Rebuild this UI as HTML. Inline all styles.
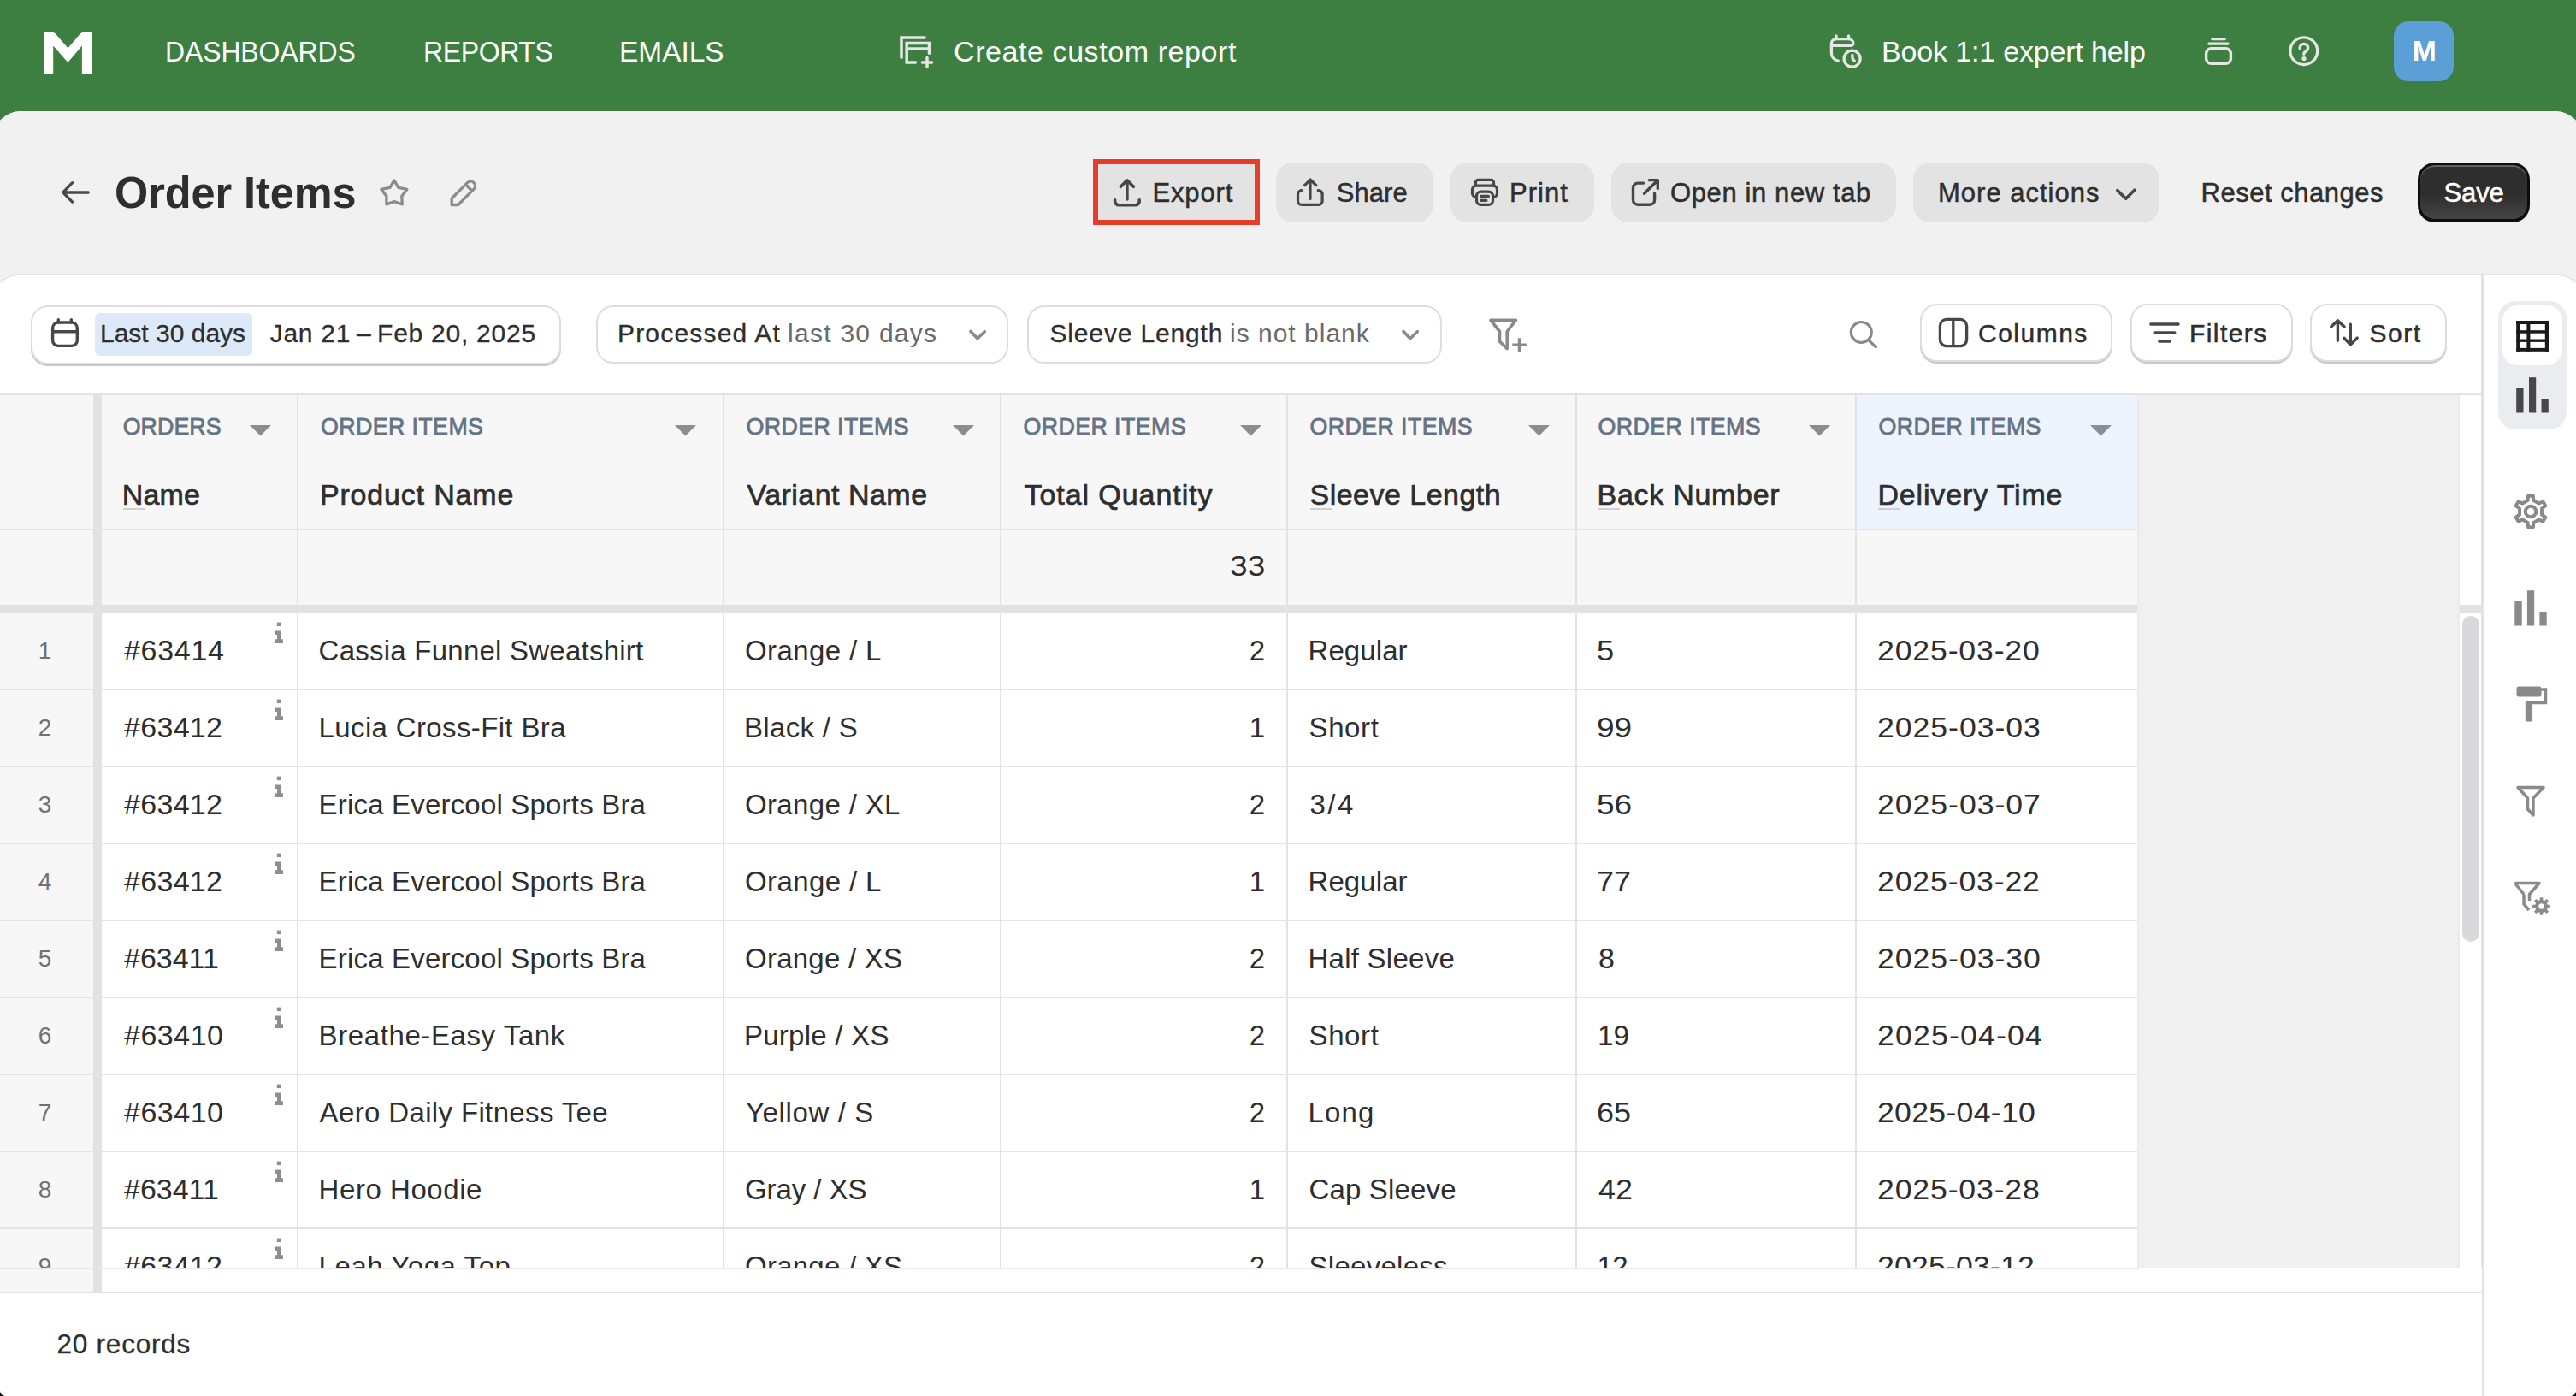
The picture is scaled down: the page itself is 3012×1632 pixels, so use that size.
<!DOCTYPE html>
<html><head><meta charset="utf-8"><style>
html,body{margin:0;padding:0;}
body{width:3012px;height:1632px;overflow:hidden;position:relative;background:#3d7f41;font-family:"Liberation Sans", sans-serif;}
div{box-sizing:border-box;}
</style></head><body>
<div style="position:absolute;left:0px;top:0px;width:3012px;height:135px;background:#3d7f41"></div><svg style="position:absolute;left:0px;top:0px;overflow:visible" width="120" height="100" viewBox="0 0 120 100"><polygon fill="#fff" points="51.8,37 62.8,37 79.4,56.3 95.9,37 107,37 107,85.9 95.9,85.9 95.9,53.6 79.4,72.9 62.2,53.6 62.2,85.9 51.8,85.9"/></svg><div style="position:absolute;left:193.18px;top:42.52px;font-size:34px;line-height:34px;color:#fff;font-weight:400;letter-spacing:-0.113px;white-space:pre;transform:scaleX(0.9400);transform-origin:0 0;">DASHBOARDS</div><div style="position:absolute;left:494.78px;top:42.52px;font-size:34px;line-height:34px;color:#fff;font-weight:400;letter-spacing:-0.365px;white-space:pre;transform:scaleX(0.9400);transform-origin:0 0;">REPORTS</div><div style="position:absolute;left:724.05px;top:42.52px;font-size:34px;line-height:34px;color:#fff;font-weight:400;letter-spacing:0.000px;white-space:pre;transform:scaleX(0.9833);transform-origin:0 0;">EMAILS</div><div style="position:absolute;left:1115.00px;top:42.52px;font-size:34px;line-height:34px;color:#fff;font-weight:400;letter-spacing:0.579px;white-space:pre;">Create custom report</div><div style="position:absolute;left:2200.00px;top:42.72px;font-size:34px;line-height:34px;color:#fff;font-weight:400;letter-spacing:-0.158px;white-space:pre;">Book 1:1 expert help</div><svg style="position:absolute;left:1045px;top:35px;overflow:visible" width="50" height="50" viewBox="0 0 50 50"><g fill="none" stroke="#e6e6e6" stroke-width="3.5" stroke-linecap="round" stroke-linejoin="miter"><path d="M9 32.2 V9.1 H36.2"/><path d="M25.4 38.1 H15.2 V15.4 H41.5 V27.2 M15.2 22 H41.5"/><path d="M39 32.4 V43.6 M33.4 38.1 H44.6"/></g></svg><svg style="position:absolute;left:2135px;top:35px;overflow:visible" width="50" height="50" viewBox="0 0 50 50"><g fill="none" stroke="#e6e6e6" stroke-width="3.3" stroke-linecap="round" stroke-linejoin="round"><path d="M14.3 36.2 C9.5 35.2 6.4 31.5 6.4 27 V16 C6.4 13 8.8 10.7 11.8 10.7 H26.8 C29.6 10.7 31.9 13 31.9 15.5 C31.9 17.5 30.5 18.3 28.5 18.3 H6.4"/><path d="M12 6.8 V10.7 M26.5 6.8 V10.7"/><circle cx="30.6" cy="33.7" r="9.5"/><path d="M30.8 29.4 V31.5 C30.8 33.5 31.8 35 33.3 36.2"/></g></svg><svg style="position:absolute;left:2570px;top:35px;overflow:visible" width="50" height="50" viewBox="0 0 50 50"><g fill="none" stroke="#e6e6e6" stroke-width="3.4" stroke-linecap="round" stroke-linejoin="round"><path d="M16.8 10.6 H31.2 M12.9 16.1 H35.1"/><rect x="9.6" y="21.8" width="28.8" height="17.6" rx="6"/></g></svg><svg style="position:absolute;left:2668px;top:35px;overflow:visible" width="50" height="50" viewBox="0 0 50 50"><g fill="none" stroke="#e6e6e6" stroke-width="3.3" stroke-linecap="round" stroke-linejoin="round"><circle cx="25.8" cy="24.7" r="15.9"/><path d="M21 21.5 C21 18.5 23 16.3 25.8 16.3 C28.6 16.3 30.6 18.3 30.6 21 C30.6 23.5 29 24.6 27.5 25.5 C26.4 26.2 25.8 27 25.8 28.3"/></g></svg><svg style="position:absolute;left:2668px;top:35px;overflow:visible" width="50" height="50" viewBox="0 0 50 50"><circle cx="26" cy="33.6" r="2.6" fill="#e6e6e6"/></svg><div style="position:absolute;left:2799px;top:25px;width:70px;height:70px;background:#5a9fd6;border-radius:17px"></div><div style="position:absolute;left:2820.50px;top:42.22px;font-size:34px;line-height:34px;color:#fff;font-weight:700;letter-spacing:0.000px;white-space:pre;">M</div><div style="position:absolute;left:-8px;top:130px;width:3028px;height:1520px;background:#f1f1f1;border-radius:32px 32px 0 0;border-top:1px solid #fbfbfb"></div><div style="position:absolute;left:133.66px;top:198.98px;font-size:52px;line-height:52px;color:#2e2e2e;font-weight:700;letter-spacing:-0.068px;white-space:pre;transform:scaleX(0.9700);transform-origin:0 0;">Order Items</div><svg style="position:absolute;left:0px;top:180px;overflow:visible" width="120" height="70" viewBox="0 0 120 70"><g fill="none" stroke="#4a4a4a" stroke-width="3.3" stroke-linecap="round" stroke-linejoin="round"><path d="M74 45 H103.2 M84.6 33.7 L73.7 45 L84.6 56.1"/></g></svg><svg style="position:absolute;left:430px;top:200px;overflow:visible" width="140" height="50" viewBox="0 0 140 50"><g fill="none" stroke="#8c8c8c" stroke-width="3.3" stroke-linecap="round" stroke-linejoin="round" transform="translate(-430,-200)"><path d="M461 210.9 L465.8 219.4 L475.9 221.4 L469.8 229.3 L470.3 238.9 L461 235.6 L451.9 238.9 L451.9 229.3 L445.9 221.4 L455.9 219.4 Z"/><path d="M528.2 239.5 L528.2 232 L546.5 213.7 A5.3 5.3 0 0 1 554 221.2 L535.7 239.5 Z M544.45 215.75 L551.95 223.25"/></g></svg><div style="position:absolute;left:1277.5px;top:185.5px;width:195px;height:77px;border:6px solid #e63c2a;background:#e3e3e3"></div><div style="position:absolute;left:1347.40px;top:209.76px;font-size:31px;line-height:31px;color:#2e2e2e;font-weight:400;letter-spacing:0.860px;white-space:pre;-webkit-text-stroke:0.5px #2e2e2e;">Export</div><svg style="position:absolute;left:1295px;top:200px;overflow:visible" width="50" height="50" viewBox="0 0 50 50"><g fill="none" stroke="#474747" stroke-width="3.6" stroke-linecap="round" stroke-linejoin="round"><path d="M22.9 33 V11 M15.4 18.3 L22.9 10.8 L30.4 18.3"/><path d="M8.6 33.7 V35.2 A4.5 4.5 0 0 0 13.1 39.7 H32.7 A4.5 4.5 0 0 0 37.2 35.2 V33.7"/></g></svg><div style="position:absolute;left:1492px;top:190px;width:184px;height:70px;background:#e3e3e3;border-radius:20px"></div><div style="position:absolute;left:1562.70px;top:209.76px;font-size:31px;line-height:31px;color:#2e2e2e;font-weight:400;letter-spacing:0.075px;white-space:pre;-webkit-text-stroke:0.5px #2e2e2e;">Share</div><svg style="position:absolute;left:1500px;top:195px;overflow:visible" width="60" height="60" viewBox="0 0 60 60"><g fill="none" stroke="#474747" stroke-width="3.2" stroke-linecap="round" stroke-linejoin="round"><path d="M32 37.4 V15.2 M25.5 21.7 L32 15 L38.8 21.7"/><path d="M21.7 27.6 A4.5 4.5 0 0 0 17.5 32 V39.9 A4.5 4.5 0 0 0 22 44.4 H41.6 A4.5 4.5 0 0 0 46.1 39.9 V32 A4.5 4.5 0 0 0 41.2 27.6"/></g></svg><div style="position:absolute;left:1696px;top:190px;width:168px;height:70px;background:#e3e3e3;border-radius:20px"></div><div style="position:absolute;left:1765.00px;top:209.76px;font-size:31px;line-height:31px;color:#2e2e2e;font-weight:400;letter-spacing:1.000px;white-space:pre;-webkit-text-stroke:0.5px #2e2e2e;">Print</div><svg style="position:absolute;left:1710px;top:200px;overflow:visible" width="50" height="50" viewBox="0 0 50 50"><g fill="none" stroke="#474747" stroke-width="3.2" stroke-linecap="round" stroke-linejoin="round"><path d="M15.4 17.2 V13.4 A3 3 0 0 1 18.4 10.4 H33.5 A3 3 0 0 1 36.5 13.4 V17.2"/><path d="M15.4 30.4 H16 A4.5 4.5 0 0 1 11.5 25.9 V21.7 A4.5 4.5 0 0 1 16 17.2 H36 A4.5 4.5 0 0 1 40.5 21.7 V25.9 A4.5 4.5 0 0 1 36 30.4 H35.5"/><rect x="16.5" y="24.2" width="19" height="15.2" rx="5"/><path d="M21.5 29.4 H30.4 M21.5 34.4 H27.9"/></g></svg><div style="position:absolute;left:1884px;top:190px;width:333px;height:70px;background:#e3e3e3;border-radius:20px"></div><div style="position:absolute;left:1953.00px;top:209.76px;font-size:31px;line-height:31px;color:#2e2e2e;font-weight:400;letter-spacing:0.607px;white-space:pre;-webkit-text-stroke:0.5px #2e2e2e;">Open in new tab</div><svg style="position:absolute;left:1900px;top:200px;overflow:visible" width="50" height="50" viewBox="0 0 50 50"><g fill="none" stroke="#474747" stroke-width="3.4" stroke-linecap="round" stroke-linejoin="round"><path d="M21.5 14.1 H15 A5.5 5.5 0 0 0 9.5 19.6 V33.7 A5.5 5.5 0 0 0 15 39.2 H29.1 A5.5 5.5 0 0 0 34.6 33.7 V26.3"/><path d="M22.6 26.3 L38.3 10.7 M28.3 10.6 H38.3 V20.4"/></g></svg><div style="position:absolute;left:2237px;top:190px;width:288px;height:70px;background:#e3e3e3;border-radius:20px"></div><div style="position:absolute;left:2266.00px;top:209.76px;font-size:31px;line-height:31px;color:#2e2e2e;font-weight:400;letter-spacing:1.000px;white-space:pre;-webkit-text-stroke:0.5px #2e2e2e;">More actions</div><svg style="position:absolute;left:2460px;top:200px;overflow:visible" width="50" height="50" viewBox="0 0 50 50"><g fill="none" stroke="#474747" stroke-width="3.6" stroke-linecap="round" stroke-linejoin="round"><path d="M15.8 22.6 L25.7 32.3 L35.8 22.2"/></g></svg><div style="position:absolute;left:2573.60px;top:209.76px;font-size:31px;line-height:31px;color:#2e2e2e;font-weight:400;letter-spacing:0.508px;white-space:pre;-webkit-text-stroke:0.5px #2e2e2e;">Reset changes</div><div style="position:absolute;left:2827px;top:190px;width:131px;height:70px;background:linear-gradient(#2e2e2e 55%,#454545);border:3px solid #0d0d0d;border-bottom-width:4px;border-radius:20px;box-shadow:inset 0 2px 0 #626262"></div><div style="position:absolute;left:2857.50px;top:209.76px;font-size:31px;line-height:31px;color:#fff;font-weight:400;letter-spacing:-0.100px;white-space:pre;-webkit-text-stroke:0.5px #fff;">Save</div><div style="position:absolute;left:-6px;top:320px;width:3024px;height:1400px;background:#fff;border-top:2px solid #e2e2e2;border-radius:28px 28px 0 0"></div><div style="position:absolute;left:36px;top:356.5px;width:620px;height:69px;background:#fff;border:2px solid #dedede;border-radius:20px;box-shadow:0 2px 0 #c8c8c8"></div><svg style="position:absolute;left:50px;top:365px;overflow:visible" width="50" height="50" viewBox="0 0 50 50"><g fill="none" stroke="#474747" stroke-width="3.4" stroke-linecap="round" stroke-linejoin="round"><rect x="11.6" y="12" width="28.7" height="27.4" rx="6.5"/><path d="M11.6 22.7 H40.3 M18.3 8.6 V12 M33.3 8.6 V12"/></g></svg><div style="position:absolute;left:111px;top:366px;width:184px;height:50px;background:#dbe9f9;border-radius:6px"></div><div style="position:absolute;left:117.00px;top:374.91px;font-size:30px;line-height:30px;color:#2e2e2e;font-weight:400;letter-spacing:0.000px;white-space:pre;-webkit-text-stroke:0.3px #2e2e2e;">Last 30 days</div><div style="position:absolute;left:315.70px;top:374.91px;font-size:30px;line-height:30px;color:#2e2e2e;font-weight:400;letter-spacing:0.740px;white-space:pre;-webkit-text-stroke:0.3px #2e2e2e;">Jan 21 – Feb 20, 2025</div><div style="position:absolute;left:697px;top:357px;width:482px;height:68px;background:#fff;border:2px solid #dedede;border-radius:20px"></div><div style="position:absolute;left:722.00px;top:374.91px;font-size:30px;line-height:30px;color:#2e2e2e;font-weight:400;letter-spacing:1.182px;white-space:pre;-webkit-text-stroke:0.3px #2e2e2e;">Processed At</div><div style="position:absolute;left:921.00px;top:374.91px;font-size:30px;line-height:30px;color:#6a6a6a;font-weight:400;letter-spacing:1.273px;white-space:pre;">last 30 days</div><svg style="position:absolute;left:1125px;top:375px;overflow:visible" width="40" height="35" viewBox="0 0 40 35"><g fill="none" stroke="#8a8a8a" stroke-width="3.6" stroke-linecap="round" stroke-linejoin="round"><path d="M9.9 12.5 L17.9 20.8 L26.3 12.7"/></g></svg><div style="position:absolute;left:1201px;top:357px;width:485px;height:68px;background:#fff;border:2px solid #dedede;border-radius:20px"></div><div style="position:absolute;left:1227.50px;top:374.91px;font-size:30px;line-height:30px;color:#2e2e2e;font-weight:400;letter-spacing:0.833px;white-space:pre;-webkit-text-stroke:0.3px #2e2e2e;">Sleeve Length</div><div style="position:absolute;left:1438.00px;top:374.91px;font-size:30px;line-height:30px;color:#6a6a6a;font-weight:400;letter-spacing:1.000px;white-space:pre;">is not blank</div><svg style="position:absolute;left:1631px;top:375px;overflow:visible" width="40" height="35" viewBox="0 0 40 35"><g fill="none" stroke="#8a8a8a" stroke-width="3.6" stroke-linecap="round" stroke-linejoin="round"><path d="M9.9 12.5 L17.9 20.8 L26.3 12.7"/></g></svg><svg style="position:absolute;left:1735px;top:365px;overflow:visible" width="55" height="55" viewBox="0 0 55 55"><g fill="none" stroke="#8a8a8a" stroke-width="3.6" stroke-linecap="round" stroke-linejoin="round"><path d="M7.9 9.3 H37.4 L27.2 22.5 V42.6 L18.5 34.3 V22.5 Z"/></g></svg><svg style="position:absolute;left:1735px;top:365px;overflow:visible" width="55" height="55" viewBox="0 0 55 55"><g fill="none" stroke="#8a8a8a" stroke-width="3.6" stroke-linecap="butt" stroke-linejoin="round"><path d="M41.6 30.3 V46.5 M33.3 38.2 H49.8"/></g></svg><svg style="position:absolute;left:2155px;top:365px;overflow:visible" width="50" height="50" viewBox="0 0 50 50"><g fill="none" stroke="#8a8a8a" stroke-width="3.2" stroke-linecap="round" stroke-linejoin="round"><circle cx="21.3" cy="23.5" r="12"/><path d="M30.4 33.3 L38.5 40.7"/></g></svg><div style="position:absolute;left:2244.5px;top:355px;width:225.5px;height:68px;background:#fff;border:2px solid #dedede;border-radius:20px;box-shadow:0 2px 0 #c8c8c8"></div><div style="position:absolute;left:2313.00px;top:374.91px;font-size:30px;line-height:30px;color:#2e2e2e;font-weight:400;letter-spacing:1.500px;white-space:pre;-webkit-text-stroke:0.5px #2e2e2e;">Columns</div><svg style="position:absolute;left:2260px;top:365px;overflow:visible" width="50" height="50" viewBox="0 0 50 50"><g fill="none" stroke="#474747" stroke-width="3.3" stroke-linecap="round" stroke-linejoin="round"><rect x="8.4" y="8.4" width="31.2" height="31.2" rx="7.5"/><path d="M23.8 8.4 V39.6"/></g></svg><div style="position:absolute;left:2491px;top:355px;width:189.5px;height:68px;background:#fff;border:2px solid #dedede;border-radius:20px;box-shadow:0 2px 0 #c8c8c8"></div><div style="position:absolute;left:2560.00px;top:374.91px;font-size:30px;line-height:30px;color:#2e2e2e;font-weight:400;letter-spacing:1.417px;white-space:pre;-webkit-text-stroke:0.5px #2e2e2e;">Filters</div><svg style="position:absolute;left:2505px;top:365px;overflow:visible" width="50" height="50" viewBox="0 0 50 50"><g fill="none" stroke="#474747" stroke-width="3.7" stroke-linecap="round" stroke-linejoin="round"><path d="M10 14 H41.9 M14.3 24 H37.6 M20 33.8 H31.9"/></g></svg><div style="position:absolute;left:2701px;top:355px;width:159.5px;height:68px;background:#fff;border:2px solid #dedede;border-radius:20px;box-shadow:0 2px 0 #c8c8c8"></div><div style="position:absolute;left:2770.60px;top:374.91px;font-size:30px;line-height:30px;color:#2e2e2e;font-weight:400;letter-spacing:1.467px;white-space:pre;-webkit-text-stroke:0.5px #2e2e2e;">Sort</div><svg style="position:absolute;left:2715px;top:365px;overflow:visible" width="50" height="50" viewBox="0 0 50 50"><g fill="none" stroke="#474747" stroke-width="3.4" stroke-linecap="round" stroke-linejoin="round"><path d="M18.4 33.3 V10.4 M10.7 17 L18.4 9.7 L26.1 17 M33.3 14.1 V38 M26 30.4 L33.3 38 L41.2 30.1"/></g></svg><div style="position:absolute;left:2901px;top:322px;width:3px;height:1320px;background:#e2e2e2"></div><div style="position:absolute;left:2921px;top:352px;width:80px;height:150px;background:#ebecf0;border-radius:20px"></div><div style="position:absolute;left:2926px;top:357px;width:70px;height:70px;background:#fff;border-radius:18px"></div><svg style="position:absolute;left:2930px;top:365px;overflow:visible" width="60" height="60" viewBox="0 0 60 60"><g fill="#1a1a1a" transform="translate(-2930,-365)"><rect x="2942.2" y="375" width="4.4" height="35.8"/><rect x="2975.8" y="375" width="4.2" height="35.8"/><rect x="2954.4" y="375" width="4" height="35.8"/><rect x="2942.2" y="375" width="37.8" height="4"/><rect x="2942.2" y="386.2" width="37.8" height="3.5"/><rect x="2942.2" y="396.5" width="37.8" height="3.4"/><rect x="2942.2" y="406.9" width="37.8" height="3.9"/></g></svg><svg style="position:absolute;left:2930px;top:430px;overflow:visible" width="60" height="60" viewBox="0 0 60 60"><g fill="#484848" transform="translate(-2930,-430)"><rect x="2942.2" y="454" width="8.3" height="28.5"/><rect x="2957" y="441.2" width="8.2" height="41.3"/><rect x="2971.5" y="466" width="8.3" height="16.5"/></g></svg><svg style="position:absolute;left:2930px;top:565px;overflow:visible" width="60" height="60" viewBox="0 0 60 60"><g fill="none" stroke="#8a8a8a" stroke-width="4" stroke-linejoin="round" transform="translate(-2930,-565)"><path d="M2955.64,584.92 L2956.11,579.73 L2961.89,579.73 L2962.36,584.92 L2968.65,588.55 L2973.38,586.36 L2976.27,591.37 L2972.00,594.37 L2972.00,601.63 L2976.27,604.63 L2973.38,609.64 L2968.65,607.45 L2962.36,611.08 L2961.89,616.27 L2956.11,616.27 L2955.64,611.08 L2949.35,607.45 L2944.62,609.64 L2941.73,604.63 L2946.00,601.63 L2946.00,594.37 L2941.73,591.37 L2944.62,586.36 L2949.35,588.55 Z"/><circle cx="2959" cy="598" r="6.3"/></g></svg><svg style="position:absolute;left:2930px;top:680px;overflow:visible" width="60" height="60" viewBox="0 0 60 60"><g fill="#8a8a8a" transform="translate(-2930,-680)"><rect x="2940.3" y="703" width="8.4" height="28.5"/><rect x="2954.9" y="690.2" width="8.3" height="41.3"/><rect x="2969.4" y="715.3" width="8.3" height="16.2"/></g></svg><svg style="position:absolute;left:2930px;top:790px;overflow:visible" width="60" height="60" viewBox="0 0 60 60"><g transform="translate(-2930,-790)"><rect x="2942.5" y="802.5" width="29" height="12" rx="2.5" fill="#8a8a8a"/><path d="M2971 806 H2976.5 V821.5 H2957" fill="none" stroke="#8a8a8a" stroke-width="3.5"/><rect x="2952.8" y="819" width="8.3" height="24.6" rx="1.5" fill="#8a8a8a"/></g></svg><svg style="position:absolute;left:2930px;top:905px;overflow:visible" width="60" height="60" viewBox="0 0 60 60"><g fill="none" stroke="#8a8a8a" stroke-width="3.5" stroke-linejoin="round" transform="translate(-2930,-905)"><path d="M2944 920.5 H2974 L2962 933 V953 L2955.5 946 V933 Z"/></g></svg><svg style="position:absolute;left:2930px;top:1020px;overflow:visible" width="60" height="60" viewBox="0 0 60 60"><g transform="translate(-2930,-1020)"><path d="M2940.5 1032.5 H2969 L2957.5 1045.5 V1053 M2951 1045.5 L2940.5 1032.5 M2951 1045.5 V1057 L2957 1064" fill="none" stroke="#8a8a8a" stroke-width="3.5" stroke-linejoin="round"/><path d="M2969.63,1052.24 L2969.86,1049.13 L2973.14,1049.13 L2973.37,1052.24 L2975.32,1053.04 L2977.67,1051.01 L2979.99,1053.33 L2977.96,1055.68 L2978.76,1057.63 L2981.87,1057.86 L2981.87,1061.14 L2978.76,1061.37 L2977.96,1063.32 L2979.99,1065.67 L2977.67,1067.99 L2975.32,1065.96 L2973.37,1066.76 L2973.14,1069.87 L2969.86,1069.87 L2969.63,1066.76 L2967.68,1065.96 L2965.33,1067.99 L2963.01,1065.67 L2965.04,1063.32 L2964.24,1061.37 L2961.13,1061.14 L2961.13,1057.86 L2964.24,1057.63 L2965.04,1055.68 L2963.01,1053.33 L2965.33,1051.01 L2967.68,1053.04 Z" fill="#8a8a8a"/><circle cx="2971.5" cy="1059.5" r="3.2" fill="#fff"/></g></svg><div style="position:absolute;left:0px;top:460px;width:2902px;height:2px;background:#e3e3e3"></div><div style="position:absolute;left:0px;top:462px;width:2500px;height:245px;background:#f7f7f7"></div><div style="position:absolute;left:2170.5px;top:462px;width:328px;height:156px;background:#edf4fd"></div><div style="position:absolute;left:2500px;top:462px;width:376px;height:1020px;background:#f0f0f0"></div><div style="position:absolute;left:0px;top:717px;width:109px;height:765px;background:#f7f7f7"></div><div style="position:absolute;left:119px;top:717px;width:2381px;height:765px;background:#fff"></div><div style="position:absolute;left:0px;top:617.5px;width:2500px;height:2px;background:#e3e3e3"></div><div style="position:absolute;left:0px;top:707px;width:2902px;height:10px;background:#e2e2e2"></div><div style="position:absolute;left:2500px;top:462px;width:376px;height:1022px;background:#f0f0f0;border-right:2px solid #ebebeb;border-bottom:2px solid #ebebeb"></div><div style="position:absolute;left:0px;top:804.9px;width:2500px;height:2px;background:#e3e3e3"></div><div style="position:absolute;left:0px;top:894.97px;width:2500px;height:2px;background:#e3e3e3"></div><div style="position:absolute;left:0px;top:985.04px;width:2500px;height:2px;background:#e3e3e3"></div><div style="position:absolute;left:0px;top:1075.11px;width:2500px;height:2px;background:#e3e3e3"></div><div style="position:absolute;left:0px;top:1165.1799999999998px;width:2500px;height:2px;background:#e3e3e3"></div><div style="position:absolute;left:0px;top:1255.25px;width:2500px;height:2px;background:#e3e3e3"></div><div style="position:absolute;left:0px;top:1345.32px;width:2500px;height:2px;background:#e3e3e3"></div><div style="position:absolute;left:0px;top:1435.3899999999999px;width:2500px;height:2px;background:#e3e3e3"></div><div style="position:absolute;left:109px;top:462px;width:10px;height:1049px;background:#e2e2e2"></div><div style="position:absolute;left:346.5px;top:462px;width:2px;height:1020px;background:#e3e3e3"></div><div style="position:absolute;left:844.5px;top:462px;width:2px;height:1020px;background:#e3e3e3"></div><div style="position:absolute;left:1169px;top:462px;width:2px;height:1020px;background:#e3e3e3"></div><div style="position:absolute;left:1504px;top:462px;width:2px;height:1020px;background:#e3e3e3"></div><div style="position:absolute;left:1841.7px;top:462px;width:2px;height:1020px;background:#e3e3e3"></div><div style="position:absolute;left:2169px;top:462px;width:2px;height:1020px;background:#e3e3e3"></div><div style="position:absolute;left:2498.5px;top:462px;width:2px;height:1020px;background:#ebebeb"></div><div style="position:absolute;left:143.70px;top:485.71px;font-size:26.8px;line-height:26.8px;color:#657384;font-weight:400;letter-spacing:0.060px;white-space:pre;-webkit-text-stroke:0.8px #657384;">ORDERS</div><div style="position:absolute;left:142.70px;top:560.72px;font-size:34px;line-height:34px;color:#2e2e2e;font-weight:400;letter-spacing:0.200px;white-space:pre;-webkit-text-stroke:0.7px #2e2e2e;">Name</div><div style="position:absolute;left:143.7px;top:594px;width:25px;height:2px;background:#cfcfcf"></div><svg style="position:absolute;left:292px;top:497px;overflow:visible" width="25" height="13" viewBox="0 0 25 13"><polygon fill="#8a8d91" points="0,0 25,0 12.5,12.5"/></svg><div style="position:absolute;left:374.90px;top:485.71px;font-size:26.8px;line-height:26.8px;color:#657384;font-weight:400;letter-spacing:0.400px;white-space:pre;-webkit-text-stroke:0.8px #657384;">ORDER ITEMS</div><div style="position:absolute;left:373.90px;top:560.72px;font-size:34px;line-height:34px;color:#2e2e2e;font-weight:400;letter-spacing:0.827px;white-space:pre;-webkit-text-stroke:0.7px #2e2e2e;">Product Name</div><svg style="position:absolute;left:789px;top:497px;overflow:visible" width="25" height="13" viewBox="0 0 25 13"><polygon fill="#8a8d91" points="0,0 25,0 12.5,12.5"/></svg><div style="position:absolute;left:872.50px;top:485.71px;font-size:26.8px;line-height:26.8px;color:#657384;font-weight:400;letter-spacing:0.400px;white-space:pre;-webkit-text-stroke:0.8px #657384;">ORDER ITEMS</div><div style="position:absolute;left:873.50px;top:560.72px;font-size:34px;line-height:34px;color:#2e2e2e;font-weight:400;letter-spacing:0.473px;white-space:pre;-webkit-text-stroke:0.7px #2e2e2e;">Variant Name</div><svg style="position:absolute;left:1114px;top:497px;overflow:visible" width="25" height="13" viewBox="0 0 25 13"><polygon fill="#8a8d91" points="0,0 25,0 12.5,12.5"/></svg><div style="position:absolute;left:1196.50px;top:485.71px;font-size:26.8px;line-height:26.8px;color:#657384;font-weight:400;letter-spacing:0.400px;white-space:pre;-webkit-text-stroke:0.8px #657384;">ORDER ITEMS</div><div style="position:absolute;left:1197.50px;top:560.72px;font-size:34px;line-height:34px;color:#2e2e2e;font-weight:400;letter-spacing:0.931px;white-space:pre;-webkit-text-stroke:0.7px #2e2e2e;">Total Quantity</div><svg style="position:absolute;left:1449.5px;top:497px;overflow:visible" width="25" height="13" viewBox="0 0 25 13"><polygon fill="#8a8d91" points="0,0 25,0 12.5,12.5"/></svg><div style="position:absolute;left:1531.50px;top:485.71px;font-size:26.8px;line-height:26.8px;color:#657384;font-weight:400;letter-spacing:0.400px;white-space:pre;-webkit-text-stroke:0.8px #657384;">ORDER ITEMS</div><div style="position:absolute;left:1531.50px;top:560.72px;font-size:34px;line-height:34px;color:#2e2e2e;font-weight:400;letter-spacing:0.483px;white-space:pre;-webkit-text-stroke:0.7px #2e2e2e;">Sleeve Length</div><div style="position:absolute;left:1531.5px;top:594px;width:25px;height:2px;background:#cfcfcf"></div><svg style="position:absolute;left:1787px;top:497px;overflow:visible" width="25" height="13" viewBox="0 0 25 13"><polygon fill="#8a8d91" points="0,0 25,0 12.5,12.5"/></svg><div style="position:absolute;left:1868.60px;top:485.71px;font-size:26.8px;line-height:26.8px;color:#657384;font-weight:400;letter-spacing:0.400px;white-space:pre;-webkit-text-stroke:0.8px #657384;">ORDER ITEMS</div><div style="position:absolute;left:1867.60px;top:560.72px;font-size:34px;line-height:34px;color:#2e2e2e;font-weight:400;letter-spacing:0.710px;white-space:pre;-webkit-text-stroke:0.7px #2e2e2e;">Back Number</div><div style="position:absolute;left:1868.6px;top:594px;width:25px;height:2px;background:#cfcfcf"></div><svg style="position:absolute;left:2114.5px;top:497px;overflow:visible" width="25" height="13" viewBox="0 0 25 13"><polygon fill="#8a8d91" points="0,0 25,0 12.5,12.5"/></svg><div style="position:absolute;left:2196.40px;top:485.71px;font-size:26.8px;line-height:26.8px;color:#657384;font-weight:400;letter-spacing:0.400px;white-space:pre;-webkit-text-stroke:0.8px #657384;">ORDER ITEMS</div><div style="position:absolute;left:2195.40px;top:560.72px;font-size:34px;line-height:34px;color:#2e2e2e;font-weight:400;letter-spacing:0.850px;white-space:pre;-webkit-text-stroke:0.7px #2e2e2e;">Delivery Time</div><div style="position:absolute;left:2196.4px;top:594px;width:25px;height:2px;background:#cfcfcf"></div><svg style="position:absolute;left:2444px;top:497px;overflow:visible" width="25" height="13" viewBox="0 0 25 13"><polygon fill="#8a8d91" points="0,0 25,0 12.5,12.5"/></svg><div style="position:absolute;left:1438.38px;top:645.37px;font-size:33px;line-height:33px;color:#2e2e2e;font-weight:400;letter-spacing:0.107px;white-space:pre;transform:scaleX(1.1200);transform-origin:0 0;">33</div><div style="position:absolute;left:0;width:105px;text-align:center;top:746.70px;font-size:28px;line-height:28px;color:#6e7176">1</div><div style="position:absolute;left:144.70px;top:743.67px;font-size:33px;line-height:33px;color:#2e2e2e;font-weight:400;letter-spacing:0.685px;white-space:pre;transform:scaleX(1.0300);transform-origin:0 0;">#63414</div><svg style="position:absolute;left:315px;top:721.6px;overflow:visible" width="20" height="30" viewBox="0 0 20 30"><g fill="#8b8f94" transform="translate(-315,-721.60)"><rect x="323.8" y="727.20" width="5" height="4.5"/><polygon points="321.7,737.20 328.8,737.20 328.8,746.90 331,746.90 331,751.50 321.7,751.50 321.7,746.90 324,746.90 324,741.50 321.7,741.50"/></g></svg><div style="position:absolute;left:372.60px;top:743.67px;font-size:33px;line-height:33px;color:#2e2e2e;font-weight:400;letter-spacing:0.239px;white-space:pre;">Cassia Funnel Sweatshirt</div><div style="position:absolute;left:871.00px;top:743.67px;font-size:33px;line-height:33px;color:#2e2e2e;font-weight:400;letter-spacing:0.389px;white-space:pre;">Orange / L</div><div style="position:absolute;left:1460.70px;top:743.67px;font-size:33px;line-height:33px;color:#2e2e2e;font-weight:400;letter-spacing:0.000px;white-space:pre;">2</div><div style="position:absolute;left:1529.50px;top:743.67px;font-size:33px;line-height:33px;color:#2e2e2e;font-weight:400;letter-spacing:0.083px;white-space:pre;">Regular</div><div style="position:absolute;left:1867.40px;top:743.67px;font-size:33px;line-height:33px;color:#2e2e2e;font-weight:400;letter-spacing:0.000px;white-space:pre;transform:scaleX(1.1000);transform-origin:0 0;">5</div><div style="position:absolute;left:2195.34px;top:743.67px;font-size:33px;line-height:33px;color:#2e2e2e;font-weight:400;letter-spacing:0.774px;white-space:pre;transform:scaleX(1.0800);transform-origin:0 0;">2025-03-20</div><div style="position:absolute;left:0;width:105px;text-align:center;top:836.75px;font-size:28px;line-height:28px;color:#6e7176">2</div><div style="position:absolute;left:144.70px;top:833.72px;font-size:33px;line-height:33px;color:#2e2e2e;font-weight:400;letter-spacing:0.297px;white-space:pre;transform:scaleX(1.0300);transform-origin:0 0;">#63412</div><svg style="position:absolute;left:315px;top:811.65px;overflow:visible" width="20" height="30" viewBox="0 0 20 30"><g fill="#8b8f94" transform="translate(-315,-811.65)"><rect x="323.8" y="817.25" width="5" height="4.5"/><polygon points="321.7,827.25 328.8,827.25 328.8,836.95 331,836.95 331,841.55 321.7,841.55 321.7,836.95 324,836.95 324,831.55 321.7,831.55"/></g></svg><div style="position:absolute;left:372.60px;top:833.72px;font-size:33px;line-height:33px;color:#2e2e2e;font-weight:400;letter-spacing:0.361px;white-space:pre;">Lucia Cross-Fit Bra</div><div style="position:absolute;left:870.00px;top:833.72px;font-size:33px;line-height:33px;color:#2e2e2e;font-weight:400;letter-spacing:0.312px;white-space:pre;">Black / S</div><div style="position:absolute;left:1460.70px;top:833.72px;font-size:33px;line-height:33px;color:#2e2e2e;font-weight:400;letter-spacing:0.000px;white-space:pre;">1</div><div style="position:absolute;left:1530.50px;top:833.72px;font-size:33px;line-height:33px;color:#2e2e2e;font-weight:400;letter-spacing:0.625px;white-space:pre;">Short</div><div style="position:absolute;left:1867.36px;top:833.72px;font-size:33px;line-height:33px;color:#2e2e2e;font-weight:400;letter-spacing:0.036px;white-space:pre;transform:scaleX(1.1200);transform-origin:0 0;">99</div><div style="position:absolute;left:2195.34px;top:833.72px;font-size:33px;line-height:33px;color:#2e2e2e;font-weight:400;letter-spacing:0.877px;white-space:pre;transform:scaleX(1.0800);transform-origin:0 0;">2025-03-03</div><div style="position:absolute;left:0;width:105px;text-align:center;top:926.80px;font-size:28px;line-height:28px;color:#6e7176">3</div><div style="position:absolute;left:144.70px;top:923.77px;font-size:33px;line-height:33px;color:#2e2e2e;font-weight:400;letter-spacing:0.297px;white-space:pre;transform:scaleX(1.0300);transform-origin:0 0;">#63412</div><svg style="position:absolute;left:315px;top:901.7px;overflow:visible" width="20" height="30" viewBox="0 0 20 30"><g fill="#8b8f94" transform="translate(-315,-901.70)"><rect x="323.8" y="907.30" width="5" height="4.5"/><polygon points="321.7,917.30 328.8,917.30 328.8,927.00 331,927.00 331,931.60 321.7,931.60 321.7,927.00 324,927.00 324,921.60 321.7,921.60"/></g></svg><div style="position:absolute;left:372.60px;top:923.77px;font-size:33px;line-height:33px;color:#2e2e2e;font-weight:400;letter-spacing:0.188px;white-space:pre;">Erica Evercool Sports Bra</div><div style="position:absolute;left:871.00px;top:923.77px;font-size:33px;line-height:33px;color:#2e2e2e;font-weight:400;letter-spacing:0.350px;white-space:pre;">Orange / XL</div><div style="position:absolute;left:1460.70px;top:923.77px;font-size:33px;line-height:33px;color:#2e2e2e;font-weight:400;letter-spacing:0.000px;white-space:pre;">2</div><div style="position:absolute;left:1531.50px;top:923.77px;font-size:33px;line-height:33px;color:#2e2e2e;font-weight:400;letter-spacing:2.500px;white-space:pre;">3/4</div><div style="position:absolute;left:1867.36px;top:923.77px;font-size:33px;line-height:33px;color:#2e2e2e;font-weight:400;letter-spacing:0.036px;white-space:pre;transform:scaleX(1.1200);transform-origin:0 0;">56</div><div style="position:absolute;left:2195.34px;top:923.77px;font-size:33px;line-height:33px;color:#2e2e2e;font-weight:400;letter-spacing:0.885px;white-space:pre;transform:scaleX(1.0800);transform-origin:0 0;">2025-03-07</div><div style="position:absolute;left:0;width:105px;text-align:center;top:1016.85px;font-size:28px;line-height:28px;color:#6e7176">4</div><div style="position:absolute;left:144.70px;top:1013.82px;font-size:33px;line-height:33px;color:#2e2e2e;font-weight:400;letter-spacing:0.297px;white-space:pre;transform:scaleX(1.0300);transform-origin:0 0;">#63412</div><svg style="position:absolute;left:315px;top:991.75px;overflow:visible" width="20" height="30" viewBox="0 0 20 30"><g fill="#8b8f94" transform="translate(-315,-991.75)"><rect x="323.8" y="997.35" width="5" height="4.5"/><polygon points="321.7,1007.35 328.8,1007.35 328.8,1017.05 331,1017.05 331,1021.65 321.7,1021.65 321.7,1017.05 324,1017.05 324,1011.65 321.7,1011.65"/></g></svg><div style="position:absolute;left:372.60px;top:1013.82px;font-size:33px;line-height:33px;color:#2e2e2e;font-weight:400;letter-spacing:0.188px;white-space:pre;">Erica Evercool Sports Bra</div><div style="position:absolute;left:871.00px;top:1013.82px;font-size:33px;line-height:33px;color:#2e2e2e;font-weight:400;letter-spacing:0.389px;white-space:pre;">Orange / L</div><div style="position:absolute;left:1460.70px;top:1013.82px;font-size:33px;line-height:33px;color:#2e2e2e;font-weight:400;letter-spacing:0.000px;white-space:pre;">1</div><div style="position:absolute;left:1529.50px;top:1013.82px;font-size:33px;line-height:33px;color:#2e2e2e;font-weight:400;letter-spacing:0.083px;white-space:pre;">Regular</div><div style="position:absolute;left:1867.42px;top:1013.82px;font-size:33px;line-height:33px;color:#2e2e2e;font-weight:400;letter-spacing:0.000px;white-space:pre;transform:scaleX(1.0909);transform-origin:0 0;">77</div><div style="position:absolute;left:2195.34px;top:1013.82px;font-size:33px;line-height:33px;color:#2e2e2e;font-weight:400;letter-spacing:0.782px;white-space:pre;transform:scaleX(1.0800);transform-origin:0 0;">2025-03-22</div><div style="position:absolute;left:0;width:105px;text-align:center;top:1106.90px;font-size:28px;line-height:28px;color:#6e7176">5</div><div style="position:absolute;left:144.70px;top:1103.87px;font-size:33px;line-height:33px;color:#2e2e2e;font-weight:400;letter-spacing:0.000px;white-space:pre;transform:scaleX(1.0292);transform-origin:0 0;">#63411</div><svg style="position:absolute;left:315px;top:1081.8px;overflow:visible" width="20" height="30" viewBox="0 0 20 30"><g fill="#8b8f94" transform="translate(-315,-1081.80)"><rect x="323.8" y="1087.40" width="5" height="4.5"/><polygon points="321.7,1097.40 328.8,1097.40 328.8,1107.10 331,1107.10 331,1111.70 321.7,1111.70 321.7,1107.10 324,1107.10 324,1101.70 321.7,1101.70"/></g></svg><div style="position:absolute;left:372.60px;top:1103.87px;font-size:33px;line-height:33px;color:#2e2e2e;font-weight:400;letter-spacing:0.188px;white-space:pre;">Erica Evercool Sports Bra</div><div style="position:absolute;left:871.00px;top:1103.87px;font-size:33px;line-height:33px;color:#2e2e2e;font-weight:400;letter-spacing:0.250px;white-space:pre;">Orange / XS</div><div style="position:absolute;left:1460.70px;top:1103.87px;font-size:33px;line-height:33px;color:#2e2e2e;font-weight:400;letter-spacing:0.000px;white-space:pre;">2</div><div style="position:absolute;left:1529.50px;top:1103.87px;font-size:33px;line-height:33px;color:#2e2e2e;font-weight:400;letter-spacing:0.250px;white-space:pre;">Half Sleeve</div><div style="position:absolute;left:1868.57px;top:1103.87px;font-size:33px;line-height:33px;color:#2e2e2e;font-weight:400;letter-spacing:0.000px;white-space:pre;transform:scaleX(1.0312);transform-origin:0 0;">8</div><div style="position:absolute;left:2195.34px;top:1103.87px;font-size:33px;line-height:33px;color:#2e2e2e;font-weight:400;letter-spacing:0.877px;white-space:pre;transform:scaleX(1.0800);transform-origin:0 0;">2025-03-30</div><div style="position:absolute;left:0;width:105px;text-align:center;top:1196.95px;font-size:28px;line-height:28px;color:#6e7176">6</div><div style="position:absolute;left:144.70px;top:1193.92px;font-size:33px;line-height:33px;color:#2e2e2e;font-weight:400;letter-spacing:0.491px;white-space:pre;transform:scaleX(1.0300);transform-origin:0 0;">#63410</div><svg style="position:absolute;left:315px;top:1171.85px;overflow:visible" width="20" height="30" viewBox="0 0 20 30"><g fill="#8b8f94" transform="translate(-315,-1171.85)"><rect x="323.8" y="1177.45" width="5" height="4.5"/><polygon points="321.7,1187.45 328.8,1187.45 328.8,1197.15 331,1197.15 331,1201.75 321.7,1201.75 321.7,1197.15 324,1197.15 324,1191.75 321.7,1191.75"/></g></svg><div style="position:absolute;left:372.60px;top:1193.92px;font-size:33px;line-height:33px;color:#2e2e2e;font-weight:400;letter-spacing:0.594px;white-space:pre;">Breathe-Easy Tank</div><div style="position:absolute;left:870.00px;top:1193.92px;font-size:33px;line-height:33px;color:#2e2e2e;font-weight:400;letter-spacing:0.250px;white-space:pre;">Purple / XS</div><div style="position:absolute;left:1460.70px;top:1193.92px;font-size:33px;line-height:33px;color:#2e2e2e;font-weight:400;letter-spacing:0.000px;white-space:pre;">2</div><div style="position:absolute;left:1530.50px;top:1193.92px;font-size:33px;line-height:33px;color:#2e2e2e;font-weight:400;letter-spacing:0.625px;white-space:pre;">Short</div><div style="position:absolute;left:1867.58px;top:1193.92px;font-size:33px;line-height:33px;color:#2e2e2e;font-weight:400;letter-spacing:0.000px;white-space:pre;transform:scaleX(1.0091);transform-origin:0 0;">19</div><div style="position:absolute;left:2195.34px;top:1193.92px;font-size:33px;line-height:33px;color:#2e2e2e;font-weight:400;letter-spacing:1.082px;white-space:pre;transform:scaleX(1.0800);transform-origin:0 0;">2025-04-04</div><div style="position:absolute;left:0;width:105px;text-align:center;top:1287.00px;font-size:28px;line-height:28px;color:#6e7176">7</div><div style="position:absolute;left:144.70px;top:1283.97px;font-size:33px;line-height:33px;color:#2e2e2e;font-weight:400;letter-spacing:0.491px;white-space:pre;transform:scaleX(1.0300);transform-origin:0 0;">#63410</div><svg style="position:absolute;left:315px;top:1261.9px;overflow:visible" width="20" height="30" viewBox="0 0 20 30"><g fill="#8b8f94" transform="translate(-315,-1261.90)"><rect x="323.8" y="1267.50" width="5" height="4.5"/><polygon points="321.7,1277.50 328.8,1277.50 328.8,1287.20 331,1287.20 331,1291.80 321.7,1291.80 321.7,1287.20 324,1287.20 324,1281.80 321.7,1281.80"/></g></svg><div style="position:absolute;left:373.60px;top:1283.97px;font-size:33px;line-height:33px;color:#2e2e2e;font-weight:400;letter-spacing:0.357px;white-space:pre;">Aero Daily Fitness Tee</div><div style="position:absolute;left:872.00px;top:1283.97px;font-size:33px;line-height:33px;color:#2e2e2e;font-weight:400;letter-spacing:0.611px;white-space:pre;">Yellow / S</div><div style="position:absolute;left:1460.70px;top:1283.97px;font-size:33px;line-height:33px;color:#2e2e2e;font-weight:400;letter-spacing:0.000px;white-space:pre;">2</div><div style="position:absolute;left:1529.50px;top:1283.97px;font-size:33px;line-height:33px;color:#2e2e2e;font-weight:400;letter-spacing:1.167px;white-space:pre;">Long</div><div style="position:absolute;left:1867.42px;top:1283.97px;font-size:33px;line-height:33px;color:#2e2e2e;font-weight:400;letter-spacing:0.000px;white-space:pre;transform:scaleX(1.0909);transform-origin:0 0;">65</div><div style="position:absolute;left:2195.34px;top:1283.97px;font-size:33px;line-height:33px;color:#2e2e2e;font-weight:400;letter-spacing:0.259px;white-space:pre;transform:scaleX(1.0800);transform-origin:0 0;">2025-04-10</div><div style="position:absolute;left:0;width:105px;text-align:center;top:1377.05px;font-size:28px;line-height:28px;color:#6e7176">8</div><div style="position:absolute;left:144.70px;top:1374.02px;font-size:33px;line-height:33px;color:#2e2e2e;font-weight:400;letter-spacing:0.000px;white-space:pre;transform:scaleX(1.0292);transform-origin:0 0;">#63411</div><svg style="position:absolute;left:315px;top:1351.95px;overflow:visible" width="20" height="30" viewBox="0 0 20 30"><g fill="#8b8f94" transform="translate(-315,-1351.95)"><rect x="323.8" y="1357.55" width="5" height="4.5"/><polygon points="321.7,1367.55 328.8,1367.55 328.8,1377.25 331,1377.25 331,1381.85 321.7,1381.85 321.7,1377.25 324,1377.25 324,1371.85 321.7,1371.85"/></g></svg><div style="position:absolute;left:372.60px;top:1374.02px;font-size:33px;line-height:33px;color:#2e2e2e;font-weight:400;letter-spacing:0.550px;white-space:pre;">Hero Hoodie</div><div style="position:absolute;left:871.00px;top:1374.02px;font-size:33px;line-height:33px;color:#2e2e2e;font-weight:400;letter-spacing:-0.062px;white-space:pre;">Gray / XS</div><div style="position:absolute;left:1460.70px;top:1374.02px;font-size:33px;line-height:33px;color:#2e2e2e;font-weight:400;letter-spacing:0.000px;white-space:pre;">1</div><div style="position:absolute;left:1530.50px;top:1374.02px;font-size:33px;line-height:33px;color:#2e2e2e;font-weight:400;letter-spacing:0.167px;white-space:pre;">Cap Sleeve</div><div style="position:absolute;left:1868.51px;top:1374.02px;font-size:33px;line-height:33px;color:#2e2e2e;font-weight:400;letter-spacing:0.000px;white-space:pre;transform:scaleX(1.0882);transform-origin:0 0;">42</div><div style="position:absolute;left:2195.34px;top:1374.02px;font-size:33px;line-height:33px;color:#2e2e2e;font-weight:400;letter-spacing:0.774px;white-space:pre;transform:scaleX(1.0800);transform-origin:0 0;">2025-03-28</div><div style="position:absolute;left:0;width:105px;text-align:center;top:1467.10px;font-size:28px;line-height:28px;color:#6e7176">9</div><div style="position:absolute;left:144.70px;top:1464.07px;font-size:33px;line-height:33px;color:#2e2e2e;font-weight:400;letter-spacing:0.297px;white-space:pre;transform:scaleX(1.0300);transform-origin:0 0;">#63412</div><svg style="position:absolute;left:315px;top:1442.0px;overflow:visible" width="20" height="30" viewBox="0 0 20 30"><g fill="#8b8f94" transform="translate(-315,-1442.00)"><rect x="323.8" y="1447.60" width="5" height="4.5"/><polygon points="321.7,1457.60 328.8,1457.60 328.8,1467.30 331,1467.30 331,1471.90 321.7,1471.90 321.7,1467.30 324,1467.30 324,1461.90 321.7,1461.90"/></g></svg><div style="position:absolute;left:372.60px;top:1464.07px;font-size:33px;line-height:33px;color:#2e2e2e;font-weight:400;letter-spacing:0.542px;white-space:pre;">Leah Yoga Top</div><div style="position:absolute;left:871.00px;top:1464.07px;font-size:33px;line-height:33px;color:#2e2e2e;font-weight:400;letter-spacing:0.250px;white-space:pre;">Orange / XS</div><div style="position:absolute;left:1460.70px;top:1464.07px;font-size:33px;line-height:33px;color:#2e2e2e;font-weight:400;letter-spacing:0.000px;white-space:pre;">2</div><div style="position:absolute;left:1530.50px;top:1464.07px;font-size:33px;line-height:33px;color:#2e2e2e;font-weight:400;letter-spacing:0.278px;white-space:pre;">Sleeveless</div><div style="position:absolute;left:1867.60px;top:1464.07px;font-size:33px;line-height:33px;color:#2e2e2e;font-weight:400;letter-spacing:-0.700px;white-space:pre;">12</div><div style="position:absolute;left:2195.34px;top:1464.07px;font-size:33px;line-height:33px;color:#2e2e2e;font-weight:400;letter-spacing:0.165px;white-space:pre;transform:scaleX(1.0800);transform-origin:0 0;">2025-03-12</div><div style="position:absolute;left:0px;top:1482px;width:2902px;height:29px;background:#fff"></div><div style="position:absolute;left:0px;top:1482px;width:109px;height:29px;background:#f7f7f7"></div><div style="position:absolute;left:109px;top:1482px;width:10px;height:29px;background:#e2e2e2"></div><div style="position:absolute;left:0px;top:1482px;width:2500px;height:2px;background:#e8e8e8"></div><div style="position:absolute;left:0px;top:1510px;width:2902px;height:2px;background:#e3e3e3"></div><div style="position:absolute;left:0px;top:1512px;width:2902px;height:130px;background:#fff"></div><div style="position:absolute;left:2879px;top:720px;width:20px;height:381px;background:#d9d9dc;border-radius:10px"></div><div style="position:absolute;left:66.40px;top:1555.74px;font-size:31.5px;line-height:31.5px;color:#2e2e2e;font-weight:400;letter-spacing:0.789px;white-space:pre;-webkit-text-stroke:0.3px #2e2e2e;">20 records</div><svg style="position:absolute;left:0px;top:1612px;overflow:visible" width="20" height="20" viewBox="0 0 20 20"><path d="M0 1614 V1632 H6 A6 6 0 0 1 0 1626 Z" fill="#000" transform="translate(0,-1612)"/></svg><svg style="position:absolute;left:2992px;top:1612px;overflow:visible" width="20" height="20" viewBox="0 0 20 20"><path d="M3012 1626 V1632 H3006 A6 6 0 0 0 3012 1626 Z" fill="#000" transform="translate(-2992,-1612)"/></svg>
</body></html>
